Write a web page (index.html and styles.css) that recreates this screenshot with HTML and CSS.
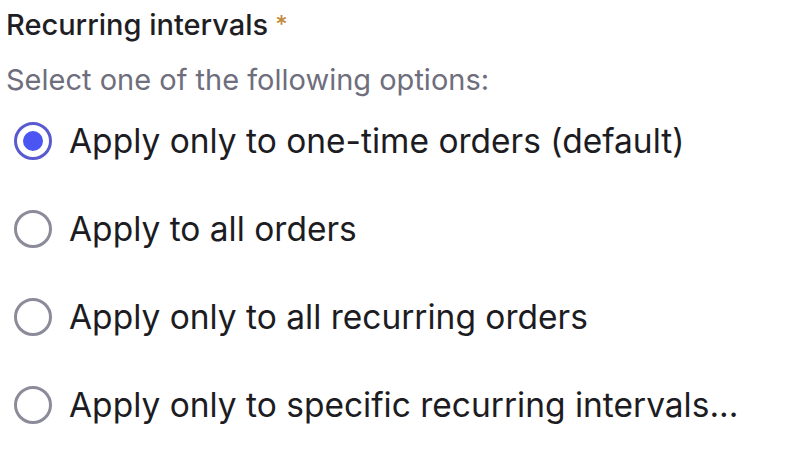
FILE: index.html
```html
<!DOCTYPE html>
<html>
<head>
<meta charset="utf-8">
<link rel="stylesheet" href="styles.css">
</head>
<body>
<div class="field">
  <div class="label">Recurring intervals<span class="req">*</span></div>
  <div class="hint">Select one of the following options:</div>
  <div class="options">
    <label class="option"><span class="radio checked"></span><span class="text">Apply only to one-time orders (default)</span></label>
    <label class="option"><span class="radio"></span><span class="text">Apply to all orders</span></label>
    <label class="option"><span class="radio"></span><span class="text">Apply only to all recurring orders</span></label>
    <label class="option"><span class="radio"></span><span class="text">Apply only to specific recurring intervals...</span></label>
  </div>
</div>
</body>
</html>
```
FILE: styles.css
```css
html, body {
  margin: 0;
  padding: 0;
  background: #ffffff;
}
body {
  font-family: Inter, "Noto Sans", sans-serif;
  width: 800px;
  height: 450px;
  overflow: hidden;
}
.field {
  padding: 6px 0 0 6px;
}
.label {
  display: flex;
  align-items: flex-start;
  font-size: 29px;
  font-weight: 500;
  color: #1e1e24;
  line-height: 38px;
  height: 38px;
}
.req {
  color: #c48a3c;
  margin-left: 7px;
  margin-top: 4px;
  font-size: 24px;
  line-height: 30px;
}
.hint {
  margin-top: 20px;
  font-size: 29px;
  color: #6e6e7c;
  line-height: 32px;
}
.options {
  display: flex;
  flex-direction: column;
  margin-top: 1px;
}
.option {
  display: flex;
  align-items: center;
  height: 88px;
}
.radio {
  box-sizing: border-box;
  width: 38px;
  height: 38px;
  border-radius: 50%;
  border: 3px solid #8b8b99;
  margin-left: 8px;
  margin-right: 17px;
  flex: none;
  display: flex;
  align-items: center;
  justify-content: center;
}
.radio.checked {
  border-color: #5a5ad0;
}
.radio.checked::after {
  content: "";
  width: 20px;
  height: 20px;
  border-radius: 50%;
  background: #4b55f2;
}
.text {
  font-size: 33.5px;
  color: #1c1c22;
}
```
